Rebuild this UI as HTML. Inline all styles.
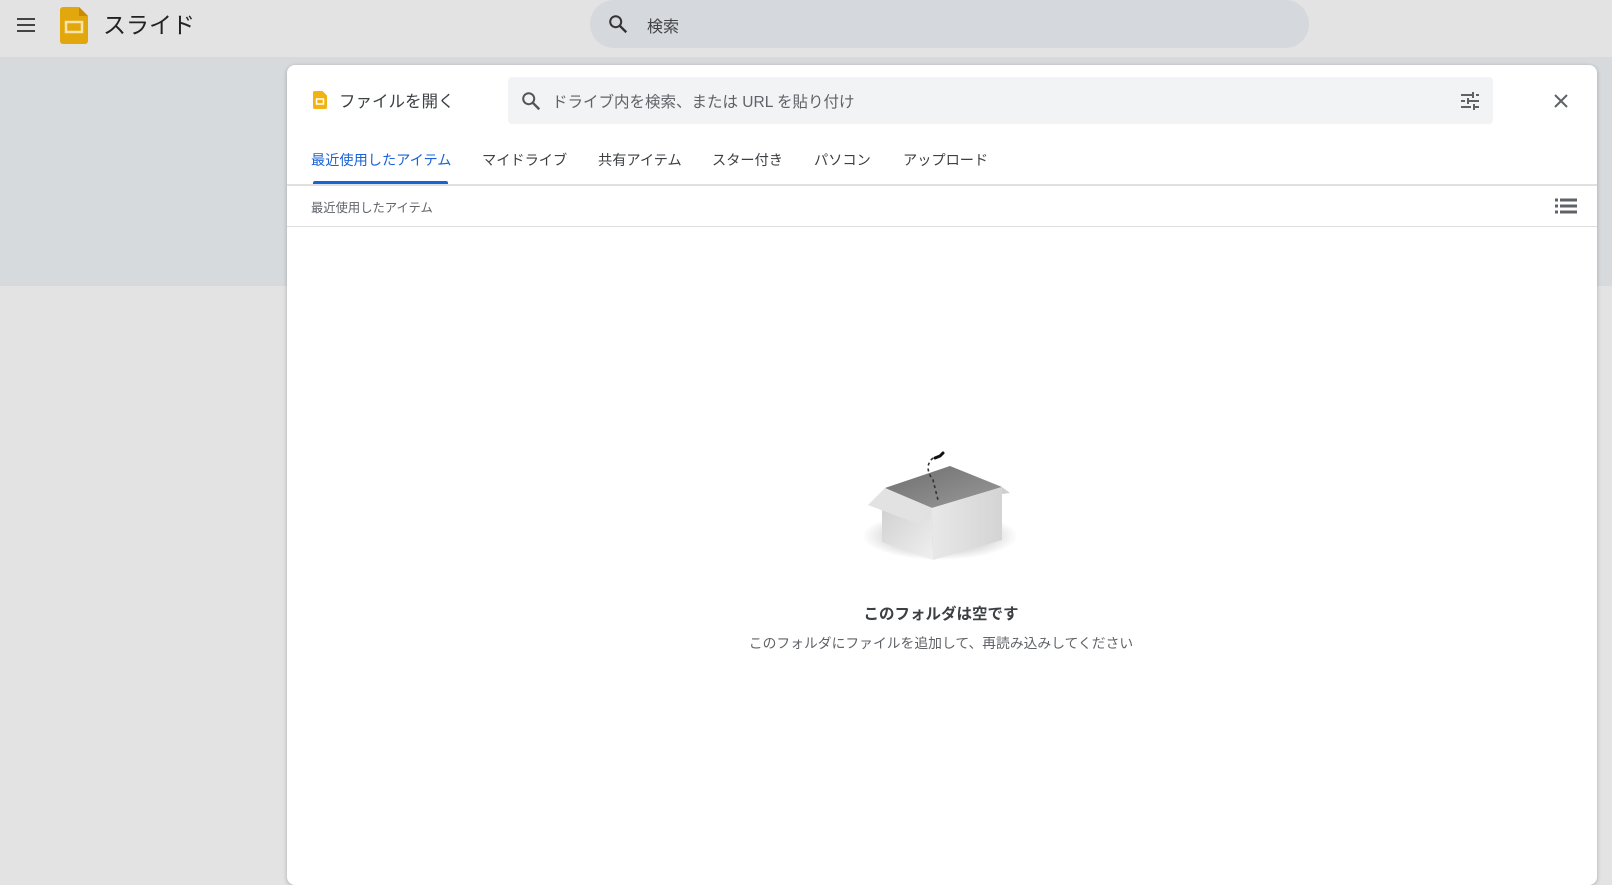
<!DOCTYPE html>
<html><head><meta charset="utf-8"><style>
*{margin:0;padding:0;box-sizing:border-box}
body{width:1612px;height:872px;overflow:hidden;background:#e3e3e3;font-family:"Liberation Sans","Noto Sans CJK JP",sans-serif;position:relative}
.a{position:absolute}
.hdr{left:0;top:0;width:1612px;height:57px;background:#e3e3e3}
.band{left:0;top:57px;width:1612px;height:229px;background:#d7dadd}
.dlg{left:287px;top:65px;width:1310px;height:820px;background:#fff;border-radius:8px;box-shadow:0 1px 4px rgba(0,0,0,.25)}
.tab{top:150px;font-size:14.2px;color:#3c4043}
</style></head><body>
<div class="a hdr"></div>
<div class="a band"></div>
<svg class="a" style="left:15px;top:15px" width="22" height="20" viewBox="0 0 22 20"><path d="M2 4h18M2 10h18M2 16h18" stroke="#444" stroke-width="2"/></svg>
<svg class="a" style="left:60px;top:7px" width="28" height="37" viewBox="0 0 28 37"><path d="M3 0h16l9 9v25a3 3 0 0 1-3 3H3a3 3 0 0 1-3-3V3a3 3 0 0 1 3-3z" fill="#e1a70c"/><path d="M19 0l9 9h-9z" fill="#c98a07"/><rect x="6" y="15" width="16" height="10" fill="none" stroke="#f8e3a8" stroke-width="2.5"/></svg>
<div class="a" style="left:103px;top:6px;font-size:23px;color:#222">スライド</div>
<div class="a" style="left:590px;top:0;width:719px;height:48px;border-radius:24px;background:#d5d8dc"></div>
<svg class="a" style="left:607px;top:13px" width="22" height="22" viewBox="0 0 24 24"><circle cx="9.5" cy="9.5" r="6" fill="none" stroke="#333" stroke-width="2.2"/><path d="M14 14l7 7" stroke="#333" stroke-width="2.6"/></svg>
<div class="a" style="left:647px;top:13px;font-size:16px;color:#444">検索</div>
<div class="a dlg"></div>
<svg class="a" style="left:313px;top:91px" width="14" height="18" viewBox="0 0 14 18"><path d="M1.5 0h8l4.5 4.5v12a1.5 1.5 0 0 1-1.5 1.5h-11A1.5 1.5 0 0 1 0 16.5v-15A1.5 1.5 0 0 1 1.5 0z" fill="#f2b211"/><rect x="3.5" y="8" width="7" height="5" fill="none" stroke="#fff" stroke-width="1.5"/></svg>
<div class="a" style="left:339px;top:88px;font-size:16.5px;color:#3c4043">ファイルを開く</div>
<div class="a" style="left:508px;top:77px;width:985px;height:47px;background:#f1f3f4;border-radius:4px"></div>
<svg class="a" style="left:520px;top:90px" width="22" height="22" viewBox="0 0 24 24"><circle cx="9.5" cy="9.5" r="6" fill="none" stroke="#555" stroke-width="2.2"/><path d="M14 14l7 7" stroke="#555" stroke-width="2.6"/></svg>
<div class="a" style="left:552px;top:90px;font-size:15.5px;color:#5f6368">ドライブ内を検索、または URL を貼り付け</div>
<svg class="a" style="left:1460px;top:91px" width="20" height="20" viewBox="0 0 20 20"><path d="M1 4h12M16 4h3M1 10h4M8 10h11M1 16h10M14 16h5M13 1v6M8 7v6M14 13v6" stroke="#5f6368" stroke-width="2"/></svg>
<svg class="a" style="left:1553px;top:93px" width="16" height="16" viewBox="0 0 16 16"><path d="M2 2l12 12M14 2L2 14" stroke="#5f6368" stroke-width="2"/></svg>
<div class="a tab" style="left:311px;color:#1a63d6">最近使用したアイテム</div>
<div class="a tab" style="left:482px">マイドライブ</div>
<div class="a tab" style="left:598px">共有アイテム</div>
<div class="a tab" style="left:712px">スター付き</div>
<div class="a tab" style="left:814px">パソコン</div>
<div class="a tab" style="left:903px">アップロード</div>
<div class="a" style="left:313px;top:181px;width:135px;height:3px;background:#1a63d6;border-radius:2px 2px 0 0"></div>
<div class="a" style="left:287px;top:184px;width:1310px;height:2px;background:#e0e0e0"></div>
<div class="a" style="left:311px;top:198px;font-size:12.3px;color:#5f6368">最近使用したアイテム</div>
<svg class="a" style="left:1555px;top:198px" width="22" height="16" viewBox="0 0 22 16"><path d="M0 2h3M5 2h17M0 8h3M5 8h17M0 14h3M5 14h17" stroke="#5f6368" stroke-width="3"/></svg>
<div class="a" style="left:287px;top:226px;width:1310px;height:1px;background:#e0e0e0"></div>
<svg class="a" style="left:800px;top:420px" width="260" height="160" viewBox="0 0 260 160">
<defs><radialGradient id="s"><stop offset="0" stop-color="#000" stop-opacity=".4"/><stop offset="1" stop-color="#000" stop-opacity="0"/></radialGradient>
<linearGradient id="f" x1="0" x2="1"><stop offset="0" stop-color="#e8e8e8"/><stop offset="1" stop-color="#d4d4d4"/></linearGradient>
<linearGradient id="g" y1="0" y2="1"><stop offset="0" stop-color="#d0d0d0"/><stop offset="1" stop-color="#f0f0f0"/></linearGradient>
<linearGradient id="o" y1="0" y2="1"><stop offset="0" stop-color="#6e6e6e"/><stop offset="1" stop-color="#9a9a9a"/></linearGradient></defs>
<ellipse cx="140" cy="116" rx="78" ry="24" fill="url(#s)"/>
<path d="M85 68L150 46 202 67 132 88z" fill="url(#o)"/>
<path d="M82 86L132 88 133 140 82 122z" fill="url(#g)"/>
<path d="M132 88L202 67 202 120 133 140z" fill="url(#f)"/>
<path d="M85 68L68 85 118 104 132 88z" fill="#e2e2e2"/>
<path d="M202 67L210 73 202 74z" fill="#cfcfcf"/>
<path d="M133 38C126 44 127 52 133 60 L138 80" stroke="#333" stroke-width="1.6" stroke-dasharray="3 3" fill="none"/>
<path d="M135 38l5-2 3-3" stroke="#111" stroke-width="3" fill="none" stroke-linecap="round"/>
</svg>
<div class="a" style="left:0;width:1882px;top:602px;text-align:center;font-size:15.5px;font-weight:bold;color:#3c4043">このフォルダは空です</div>
<div class="a" style="left:0;width:1882px;top:632px;text-align:center;font-size:13.8px;color:#5f6368">このフォルダにファイルを追加して、再読み込みしてください</div>
</body></html>
